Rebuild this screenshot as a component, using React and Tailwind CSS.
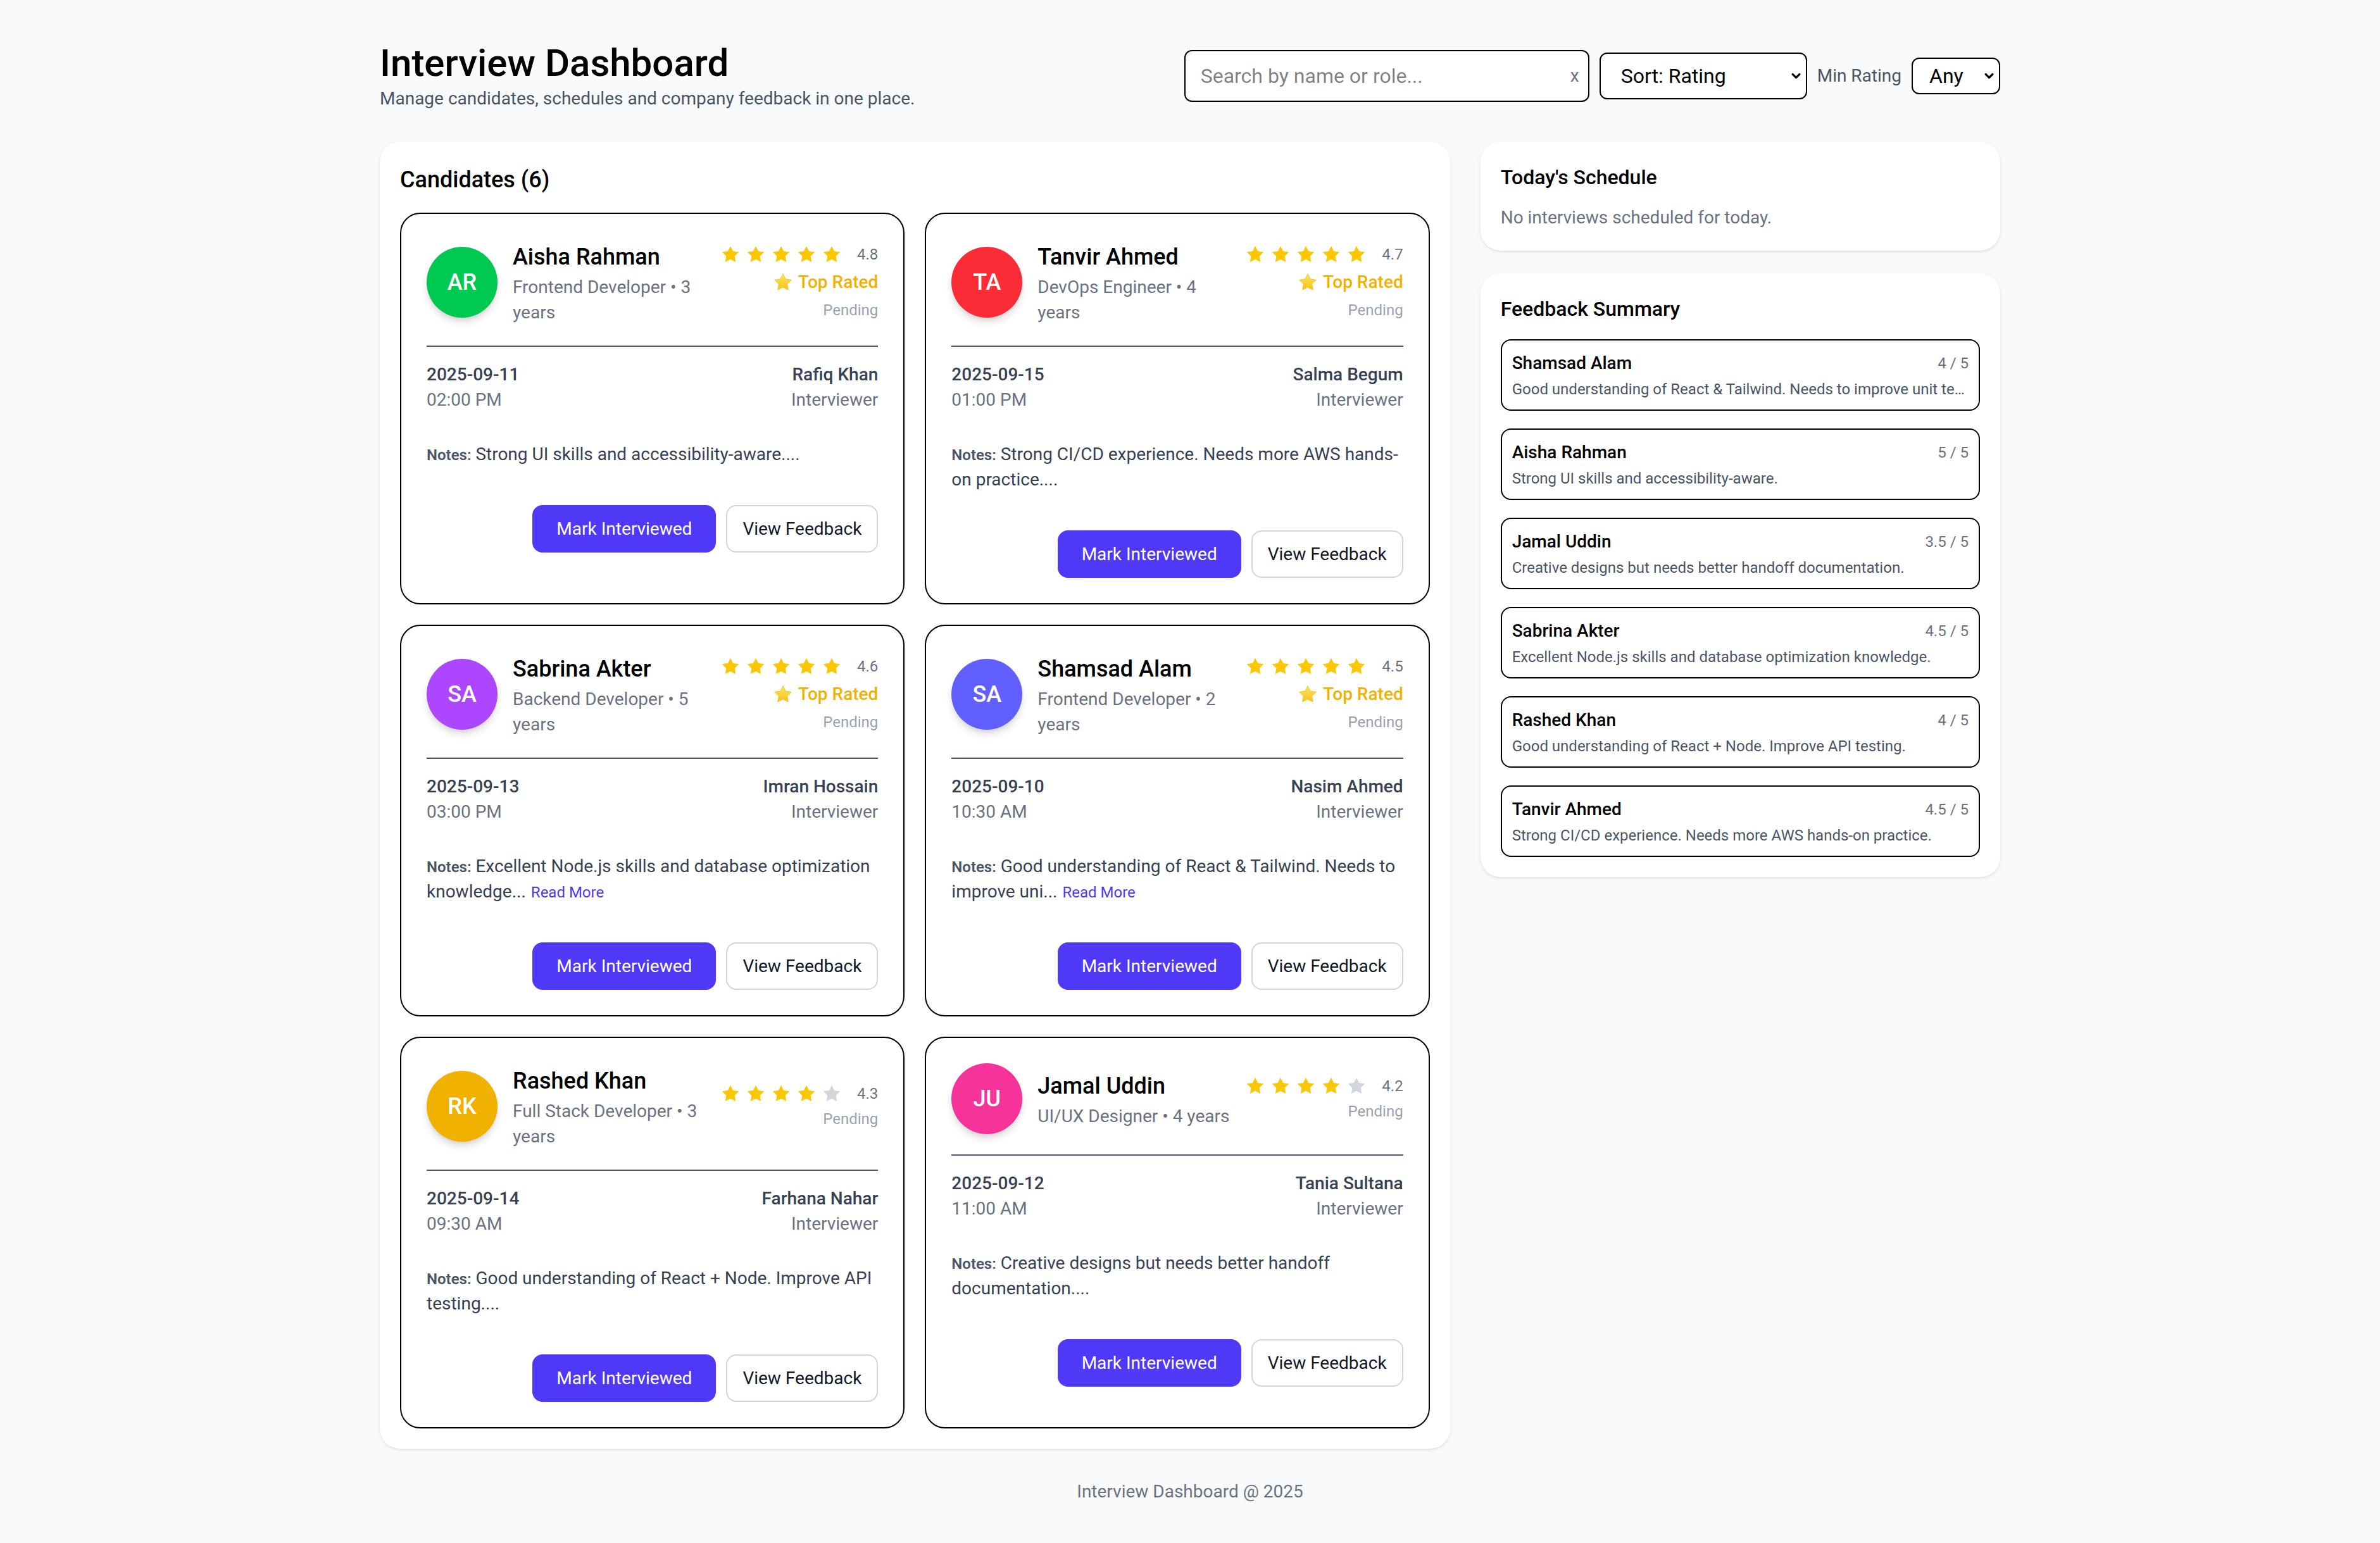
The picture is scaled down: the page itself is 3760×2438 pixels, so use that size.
import React, { useState } from "react";

const candidates = [
  {
    initials: "AR",
    name: "Aisha Rahman",
    role: "Frontend Developer",
    years: 3,
    rating: 4.8,
    topRated: true,
    date: "2025-09-11",
    time: "02:00 PM",
    interviewer: "Rafiq Khan",
    notes: "Strong UI skills and accessibility-aware....",
    readMore: false,
    color: "bg-green-500",
  },
  {
    initials: "TA",
    name: "Tanvir Ahmed",
    role: "DevOps Engineer",
    years: 4,
    rating: 4.7,
    topRated: true,
    date: "2025-09-15",
    time: "01:00 PM",
    interviewer: "Salma Begum",
    notes: "Strong CI/CD experience. Needs more AWS hands-on practice....",
    readMore: false,
    color: "bg-red-500",
  },
  {
    initials: "SA",
    name: "Sabrina Akter",
    role: "Backend Developer",
    years: 5,
    rating: 4.6,
    topRated: true,
    date: "2025-09-13",
    time: "03:00 PM",
    interviewer: "Imran Hossain",
    notes: "Excellent Node.js skills and database optimization knowledge...",
    readMore: true,
    color: "bg-purple-500",
  },
  {
    initials: "SA",
    name: "Shamsad Alam",
    role: "Frontend Developer",
    years: 2,
    rating: 4.5,
    topRated: true,
    date: "2025-09-10",
    time: "10:30 AM",
    interviewer: "Nasim Ahmed",
    notes: "Good understanding of React & Tailwind. Needs to improve uni...",
    readMore: true,
    color: "bg-indigo-500",
  },
  {
    initials: "RK",
    name: "Rashed Khan",
    role: "Full Stack Developer",
    years: 3,
    rating: 4.3,
    topRated: false,
    date: "2025-09-14",
    time: "09:30 AM",
    interviewer: "Farhana Nahar",
    notes: "Good understanding of React + Node. Improve API testing....",
    readMore: false,
    color: "bg-yellow-500",
  },
  {
    initials: "JU",
    name: "Jamal Uddin",
    role: "UI/UX Designer",
    years: 4,
    rating: 4.2,
    topRated: false,
    date: "2025-09-12",
    time: "11:00 AM",
    interviewer: "Tania Sultana",
    notes: "Creative designs but needs better handoff documentation....",
    readMore: false,
    color: "bg-pink-500",
  },
];

const feedback = [
  { name: "Shamsad Alam", score: "4", text: "Good understanding of React & Tailwind. Needs to improve unit testing." },
  { name: "Aisha Rahman", score: "5", text: "Strong UI skills and accessibility-aware." },
  { name: "Jamal Uddin", score: "3.5", text: "Creative designs but needs better handoff documentation." },
  { name: "Sabrina Akter", score: "4.5", text: "Excellent Node.js skills and database optimization knowledge." },
  { name: "Rashed Khan", score: "4", text: "Good understanding of React + Node. Improve API testing." },
  { name: "Tanvir Ahmed", score: "4.5", text: "Strong CI/CD experience. Needs more AWS hands-on practice." },
];

const STAR = "M12 2l3.09 6.26L22 9.27l-5 4.87 1.18 6.88L12 17.77l-6.18 3.25L7 14.14 2 9.27l6.91-1.01L12 2z";

function Star({ filled }) {
  return (
    <svg viewBox="0 0 24 24" className={`h-8 w-8 ${filled ? "text-yellow-400" : "text-gray-300"}`}>
      <path d={STAR} fill="currentColor" />
    </svg>
  );
}

// estrella tipo emoji junto a "Top Rated"
function EmojiStar() {
  return (
    <svg viewBox="0 0 24 24" className="h-[32px] w-[32px]">
      <defs>
        <linearGradient id="emojiStar" x1="0" y1="0" x2="0" y2="1">
          <stop offset="0" stopColor="#ffe45c" />
          <stop offset="1" stopColor="#f7c21a" />
        </linearGradient>
      </defs>
      <path d={STAR} fill="url(#emojiStar)" stroke="#f5b800" strokeWidth="0.6" strokeLinejoin="round" />
    </svg>
  );
}

function Chevron({ className }) {
  return (
    <svg viewBox="0 0 14 9" className={className} fill="none" stroke="currentColor" strokeWidth="3" strokeLinecap="round" strokeLinejoin="round">
      <path d="M2 2l5 5 5-5" />
    </svg>
  );
}

function CandidateCard({ c }) {
  const stars = Math.round(c.rating);
  return (
    <div className="flex flex-col rounded-[32px] border-2 border-black bg-white p-10">
      {/* Cabecera */}
      <div className="flex items-center justify-between gap-4">
        <div className="flex min-w-0 items-center gap-6">
          <div
            className={`flex h-28 w-28 shrink-0 items-center justify-center rounded-full text-[36px] font-medium text-white shadow-[0_8px_14px_-2px_rgba(0,0,0,0.14),0_4px_8px_-4px_rgba(0,0,0,0.12)] ${c.color}`}
          >
            {c.initials}
          </div>
          <div className="min-w-0">
            <h3 className="text-[36px] leading-[56px] font-medium text-black">{c.name}</h3>
            <p className="text-[28px] leading-[40px] text-gray-500">
              {c.role} • {c.years} years
            </p>
          </div>
        </div>
        <div className="flex shrink-0 flex-col items-end">
          <div className="flex h-8 items-center">
            <div className="flex items-center gap-2">
              {[0, 1, 2, 3, 4].map((i) => (
                <Star key={i} filled={i < stars} />
              ))}
            </div>
            <span className="ml-6 text-2xl leading-8 text-gray-500">{c.rating}</span>
          </div>
          {c.topRated && (
            <div className="mt-2 flex items-center gap-2 text-[28px] leading-[40px] font-medium text-yellow-500">
              <EmojiStar />
              Top Rated
            </div>
          )}
          <span className="mt-2 text-2xl leading-8 text-gray-400">Pending</span>
        </div>
      </div>

      {/* Fecha y entrevistador */}
      <div className="mt-8 flex justify-between border-t-2 border-gray-600 pt-6">
        <div>
          <p className="text-[28px] leading-[40px] font-medium text-gray-700">{c.date}</p>
          <p className="text-[28px] leading-[40px] text-gray-500">{c.time}</p>
        </div>
        <div className="text-right">
          <p className="text-[28px] leading-[40px] font-medium text-gray-700">{c.interviewer}</p>
          <p className="text-[28px] leading-[40px] text-gray-500">Interviewer</p>
        </div>
      </div>

      <p className="mt-[46px] text-[28px] leading-[40px] text-gray-700">
        <span className="text-2xl font-semibold text-gray-600">Notes:</span> {c.notes}
        {c.readMore && <button className="ml-2 text-2xl text-indigo-600">Read More</button>}
      </p>

      <div className="mt-[60px] flex justify-end gap-4">
        <button className="h-[75px] rounded-2xl bg-indigo-600 px-[38px] text-[28px] text-white">Mark Interviewed</button>
        <button className="h-[75px] rounded-2xl border-2 border-gray-300 bg-white px-6 text-[28px] text-gray-900">
          View Feedback
        </button>
      </div>
    </div>
  );
}

export default function App() {
  const [search, setSearch] = useState("");

  return (
    <div className="min-h-screen bg-gray-50 font-[Roboto,sans-serif] text-black">
      <div className="mx-auto max-w-[2560px] pt-16 pb-16">
        {/* Header */}
        <header className="mb-12 flex items-center justify-between">
          <div>
            <h1 className="text-6xl leading-[72px] font-medium">Interview Dashboard</h1>
            <p className="text-[28px] leading-[40px] text-gray-600">
              Manage candidates, schedules and company feedback in one place.
            </p>
          </div>
          <div className="flex items-center gap-4">
            <div className="relative w-[640px]">
              <input
                value={search}
                onChange={(e) => setSearch(e.target.value)}
                placeholder="Search by name or role..."
                className="h-[82px] w-full rounded-xl border-2 border-black bg-white pr-14 pl-6 text-[32px] outline-none"
              />
              <button className="absolute top-1/2 right-4 -translate-y-1/2 text-[28px] text-gray-500">x</button>
            </div>
            <div className="relative">
              <select className="h-[74px] w-[328px] appearance-none rounded-xl border-2 border-black bg-white pl-8 text-[32px]">
                <option>Sort: Rating</option>
                <option>Sort: Name</option>
                <option>Sort: Interview Date</option>
              </select>
              <Chevron className="pointer-events-none absolute top-1/2 right-[10px] h-[10px] w-[15px] -translate-y-1/2" />
            </div>
            <span className="text-[28px] leading-[40px] text-gray-600">Min Rating</span>
            <div className="relative">
              <select className="h-[58px] w-[140px] appearance-none rounded-xl border-2 border-black bg-white pl-[26px] text-[32px]">
                <option>Any</option>
                <option>4+</option>
                <option>4.5+</option>
              </select>
              <Chevron className="pointer-events-none absolute top-1/2 right-[10px] h-[10px] w-[15px] -translate-y-1/2" />
            </div>
          </div>
        </header>

        <main className="grid grid-cols-3 items-start gap-12">
          {/* Candidatos */}
          <section className="col-span-2 rounded-[32px] bg-white p-8 shadow-[0_2px_6px_0_rgba(0,0,0,0.08),0_2px_4px_-2px_rgba(0,0,0,0.08)]">
            <h2 className="mb-6 text-[36px] leading-[56px] font-medium">Candidates ({candidates.length})</h2>
            <div className="grid grid-cols-2 gap-8">
              {candidates.map((c) => (
                <CandidateCard key={c.name} c={c} />
              ))}
            </div>
          </section>

          {/* Columna derecha */}
          <aside className="flex flex-col gap-9">
            <div className="rounded-[32px] bg-white p-8 shadow-[0_2px_6px_0_rgba(0,0,0,0.08),0_2px_4px_-2px_rgba(0,0,0,0.08)]">
              <h2 className="text-[32px] leading-[48px] font-medium">Today's Schedule</h2>
              <p className="mt-5 text-[28px] leading-[40px] text-gray-500">No interviews scheduled for today.</p>
            </div>
            <div className="rounded-[32px] bg-white p-8 shadow-[0_2px_6px_0_rgba(0,0,0,0.08),0_2px_4px_-2px_rgba(0,0,0,0.08)]">
              <h2 className="mb-6 text-[32px] leading-[48px] font-medium">Feedback Summary</h2>
              <div className="flex flex-col gap-7">
                {feedback.map((f) => (
                  <div key={f.name} className="rounded-2xl border-2 border-black px-4 py-4">
                    <div className="flex items-center justify-between">
                      <span className="text-[28px] leading-[40px] font-medium">{f.name}</span>
                      <span className="text-2xl leading-8 text-gray-500">{f.score} / 5</span>
                    </div>
                    <p className="mt-[5px] truncate text-2xl leading-8 text-gray-600">{f.text}</p>
                  </div>
                ))}
              </div>
            </div>
          </aside>
        </main>

        <footer className="mt-12 text-center text-[28px] leading-[40px] text-gray-500">Interview Dashboard @ 2025</footer>
      </div>
    </div>
  );
}
